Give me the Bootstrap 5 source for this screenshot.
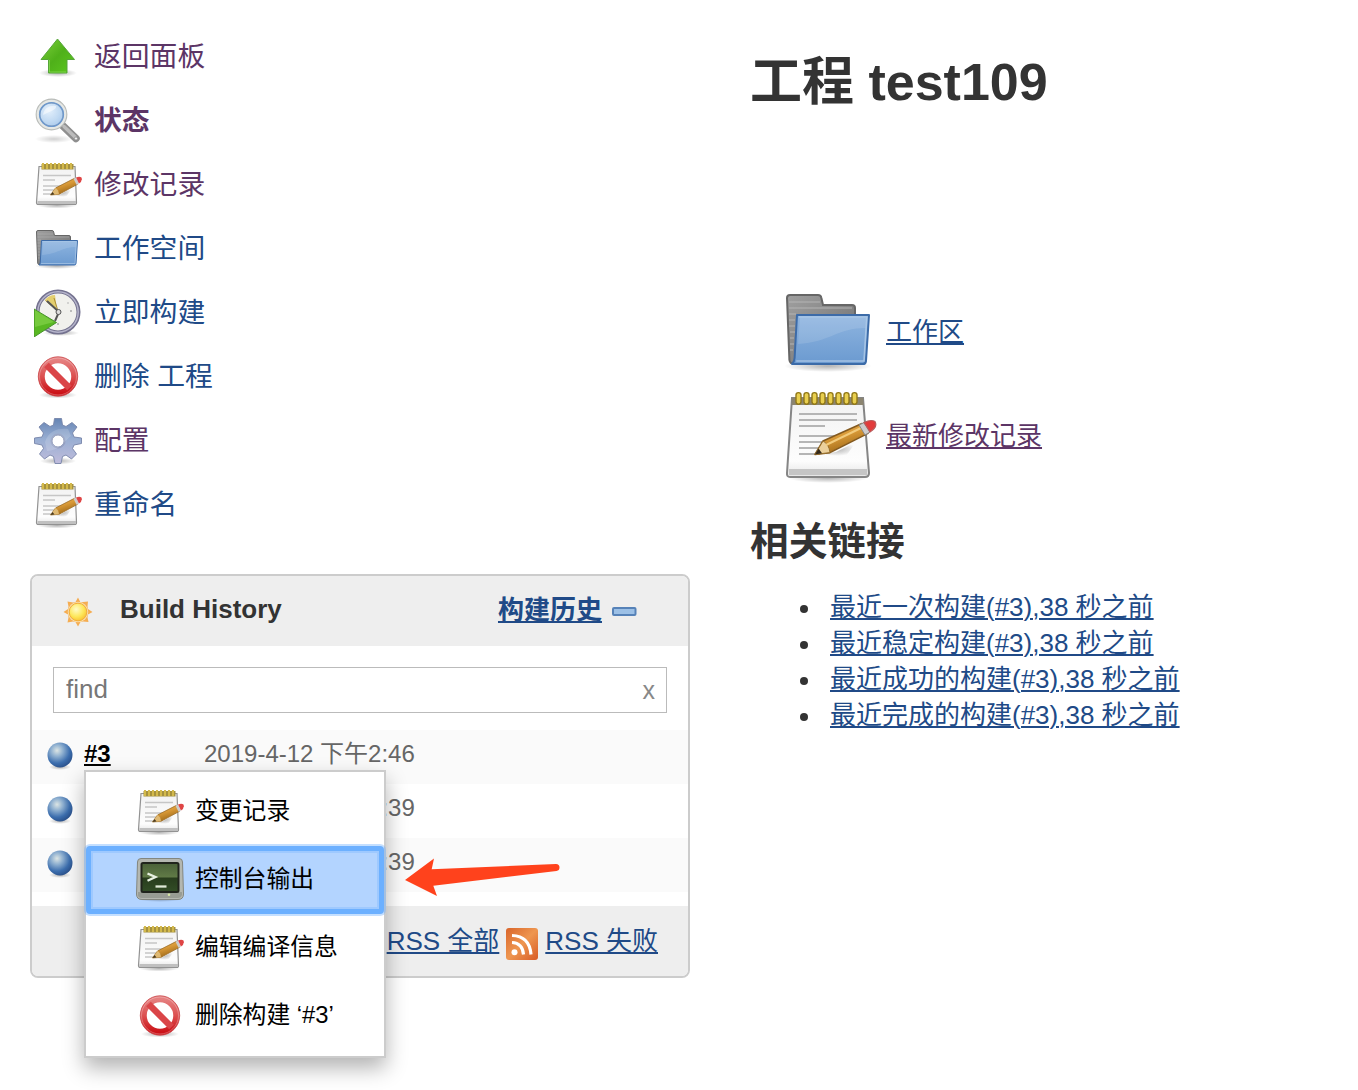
<!DOCTYPE html>
<html lang="zh-CN">
<head>
<meta charset="utf-8">
<meta name="viewport" content="width=device-width, initial-scale=1">
<title>test109 [Jenkins]</title>
<link href="https://cdn.jsdelivr.net/npm/bootstrap@5.3.0/dist/css/bootstrap.min.css" rel="stylesheet">
<style>
body{font-family:"Liberation Sans","Noto Sans CJK SC",sans-serif;color:#333;background:#fff;font-size:26px;line-height:36px;overflow:hidden;min-height:1090px}
a{color:#204a87;text-underline-offset:2px;text-decoration-thickness:2px}
a.seen{color:#5c3566}
.side-col{width:690px;padding:25px 0 0 30px}
.task-link{height:64px;padding:0 0 0 4px;gap:12px;font-size:27.8px;text-decoration:none}
.ico{width:48px;height:48px;flex:none;display:block;filter:blur(.45px)}
.ico-lg{width:96px;height:96px;flex:none;display:block;margin-top:-6px}
.menu-row span{margin-top:-3px}
.history{margin-top:37px;border:2px solid #ccc;border-radius:8px;background:#fff}
.history-head{height:70px;background:#eee;padding:0 50px 0 30px;border-radius:6px 6px 0 0}
.history-head .ttl{margin-left:26px;margin-top:-4px}
.history-head a{margin-top:-3px}
.history-head svg{margin-top:2px}
.find-box{height:46px;margin:21px 21px 17px;border:1px solid #bbb;padding:0 11px 2px 12px;color:#777}
.find-box .clr{color:#888;font-size:25px;margin-top:1px}
.build-row{height:54px;padding:0 12px;font-size:24px;color:#666}
.build-row:nth-child(odd){background:#fafafa}
.build-row svg{width:32px;height:32px;margin-top:-4px}
.build-row .num,.build-row time{margin-top:-6px}
.build-row .num{width:120px;margin-left:8px}
.build-row a{color:#000}
.history-foot{height:70px;margin-top:14px;background:#eee;padding:0 30px 0 0;border-radius:0 0 6px 6px;gap:7px}
.history-foot svg{width:32px;height:32px;margin-top:6px}
.build-menu{left:84px;top:770px;width:302px;height:288px;border:2px solid #ccc;background:#fff;padding:6px 0;box-shadow:0 10px 20px rgba(0,0,0,.3);font-size:23.8px;color:#000}
.menu-row{height:68px;padding-left:50px;gap:11px;color:#000;text-decoration:none}
.menu-row.on{background:#b3d4ff;border:5px solid #6cb0ff;border-radius:4px;padding-left:45px;box-shadow:0 0 0 2px rgba(108,176,255,.4),inset 0 0 0 2px rgba(108,176,255,.3)}
.menu-row.on .ico{margin-top:2px}
.pointer{left:400px;top:852px}
.main-col{padding:51px 0 0 60px}
.main-col h1{font-size:52px;line-height:62px;font-weight:700;margin:0 0 170px}
.main-col h2{font-size:38.7px;line-height:50px;font-weight:700;margin:26px 0 22px}
.perm{height:104px;margin-left:32px;gap:8px}
.perm a{margin-top:-7px}
.related{padding-left:50px;margin:0}
.related li{gap:22px}
.related li::before{content:"";width:8px;height:8px;border-radius:50%;background:#333;margin-top:3px}
</style>
</head>
<body>
<svg width="0" height="0" class="position-absolute" aria-hidden="true">
<defs>
<linearGradient id="gUp" x1="0" y1="0" x2="1" y2="1"><stop offset="0" stop-color="#7fd03c"/><stop offset=".5" stop-color="#4fb01a"/><stop offset="1" stop-color="#5cc81f"/></linearGradient>
<linearGradient id="gFold" x1="0" y1="0" x2="0" y2="1"><stop offset="0" stop-color="#8fb5e0"/><stop offset="1" stop-color="#6b9ad0"/></linearGradient>
<linearGradient id="gBack" x1="0" y1="0" x2="1" y2="1"><stop offset="0" stop-color="#a0a0a0"/><stop offset="1" stop-color="#6c6c6c"/></linearGradient>
<linearGradient id="gPaper" x1="0" y1="0" x2="0" y2="1"><stop offset="0" stop-color="#f2f2f2"/><stop offset=".8" stop-color="#fdfdfd"/><stop offset="1" stop-color="#e4e4e4"/></linearGradient>
<linearGradient id="gNo" x1="0" y1="0" x2="0" y2="1"><stop offset="0" stop-color="#e58080"/><stop offset=".5" stop-color="#dc5050"/><stop offset="1" stop-color="#cb1218"/></linearGradient>
<linearGradient id="gGear" x1="0" y1="0" x2="0" y2="1"><stop offset="0" stop-color="#6685b4"/><stop offset=".45" stop-color="#98aed2"/><stop offset="1" stop-color="#c0bcdc"/></linearGradient>
<linearGradient id="gPen" x1="0" y1="0" x2=".5" y2="1"><stop offset="0" stop-color="#e9b65a"/><stop offset=".5" stop-color="#d99a38"/><stop offset="1" stop-color="#9a6414"/></linearGradient>
<linearGradient id="gScr" x1="0" y1="0" x2="0" y2="1"><stop offset="0" stop-color="#496038"/><stop offset=".48" stop-color="#607a46"/><stop offset=".52" stop-color="#283d1d"/><stop offset="1" stop-color="#324d26"/></linearGradient>
<linearGradient id="gRss" x1="0" y1="0" x2="1" y2="1"><stop offset="0" stop-color="#d9652b"/><stop offset=".5" stop-color="#ee9650"/><stop offset="1" stop-color="#d85b25"/></linearGradient>
<radialGradient id="gBall" cx=".38" cy=".32" r=".68"><stop offset="0" stop-color="#dce5e4"/><stop offset=".35" stop-color="#8fb0d0"/><stop offset=".75" stop-color="#3c6eae"/><stop offset="1" stop-color="#2d5590"/></radialGradient>
<radialGradient id="gSun" cx=".4" cy=".35" r=".7"><stop offset="0" stop-color="#fffbc8"/><stop offset=".6" stop-color="#fde75a"/><stop offset="1" stop-color="#f8c030"/></radialGradient>
<radialGradient id="gLens" cx=".4" cy=".35" r=".7"><stop offset="0" stop-color="#e4f0fc"/><stop offset=".6" stop-color="#c0d9f2"/><stop offset="1" stop-color="#a4c5ea"/></radialGradient>
<radialGradient id="gShade"><stop offset="0" stop-color="#000" stop-opacity=".3"/><stop offset="1" stop-color="#000" stop-opacity="0"/></radialGradient>
</defs>
<symbol id="i-up" viewBox="0 0 48 48"><ellipse cx="24" cy="40" rx="19" ry="4" fill="url(#gShade)"/><path d="M23.500 6 40.500 26.500H33V40H14.500V26.500H7Z" fill="url(#gUp)" stroke="#56a53a" stroke-width="1"/><path d="M15.500 27V39H32" fill="none" stroke="#8be05a" stroke-width="1" opacity=".7"/></symbol>
<symbol id="i-search" viewBox="0 0 48 48"><ellipse cx="20" cy="42" rx="19" ry="4" fill="url(#gShade)" opacity=".6"/><path d="M28 28 42 41.500" stroke="#8f8f8f" stroke-width="7.500" stroke-linecap="round"/><path d="M30 29.500 41 40" stroke="#bcbcbc" stroke-width="3.500" stroke-linecap="round"/><circle cx="42" cy="41.500" r="1.600" fill="#eee" stroke="#888" stroke-width=".7"/><circle cx="17.500" cy="17.500" r="13.500" fill="url(#gLens)" stroke="#b9bcb9" stroke-width="4.800"/><circle cx="17.500" cy="17.500" r="13.500" fill="none" stroke="#e6e8e5" stroke-width="2.600"/><circle cx="17.500" cy="17.500" r="11.800" fill="none" stroke="#6d98cd" stroke-width="1.600"/><path d="M9 18C10 11 16 8 22 9 23 13 16 14 9 18Z" fill="#fff" opacity=".5"/></symbol>
<symbol id="i-note-s" viewBox="0 0 48 48"><ellipse cx="23" cy="44.500" rx="20" ry="3" fill="url(#gShade)"/><path d="M5 5.500H41L42.500 41.500Q42.500 43.500 40.500 43.500H4.500Q2.500 43.500 2.500 41.500Z" fill="url(#gPaper)" stroke="#929292" stroke-width="1.200"/><path d="M3.500 40H42V43H3.500Z" fill="#c0c0c0"/><path d="M7.500 3H39.500V8.500H7.500Z" fill="#a5913f"/><path d="M9 2V8M13 2V8M17 2V8M21 2V8M25 2V8M29 2V8M33 2V8M37 2V8" stroke="#d3b94b" stroke-width="2"/><path d="M9 14.500H37M9 19H21M9 25H33M9 29H25M9 33H18" stroke="#c6c6c6" stroke-width="1.600"/><path d="M17 35 27 33 38 27 32 36Z" fill="url(#gShade)"/><path d="M16.500 34 21.500 27 40.500 17.300 43.500 23.300 25 33.300Z" fill="url(#gPen)" stroke="#9a6b25" stroke-width=".8"/><path d="M16.500 34 21.500 27Q24.500 28.500 25 33.300Z" fill="#dfb973"/><path d="M16.500 34 18.500 31 20.500 33.500Z" fill="#463820"/><path d="M39.500 17.800 42 16.500 45 22.500 42.500 23.800Z" fill="#ccc"/><path d="M42 16.500Q45.500 15 47.500 16.500 48.800 20 45 22.500Z" fill="#df4545"/></symbol>
<symbol id="i-note" viewBox="0 0 48 48"><ellipse cx="23" cy="45" rx="20" ry="2.500" fill="url(#gShade)"/><path d="M5 5H40.500L43.500 42.500Q43.500 44.500 41.500 44.500H4Q2.300 44.500 2.500 42.500Z" fill="url(#gPaper)" stroke="#858585" stroke-width="1"/><path d="M5 5H40.500L40.800 8.500H4.800Z" fill="#8b8470"/><path d="M3.500 40.500H42.500V43.500H3.500Z" fill="#c5c5c5"/><g fill="#e9cf4e" stroke="#917818" stroke-width=".7"><rect x="7" y="2.300" width="2.500" height="5.800" rx="1.200"/><rect x="11" y="2.300" width="2.500" height="5.800" rx="1.200"/><rect x="15" y="2.300" width="2.500" height="5.800" rx="1.200"/><rect x="19" y="2.300" width="2.500" height="5.800" rx="1.200"/><rect x="23" y="2.300" width="2.500" height="5.800" rx="1.200"/><rect x="27" y="2.300" width="2.500" height="5.800" rx="1.200"/><rect x="31" y="2.300" width="2.500" height="5.800" rx="1.200"/><rect x="35" y="2.300" width="2.500" height="5.800" rx="1.200"/></g><path d="M8.500 13H37.500M8.500 16H37.500M8.500 19H21.500M8.500 24H35M8.500 27H31M8.500 30H27M8.500 33H19" stroke="#b5b5b5" stroke-width=".9"/><path d="M17 33.500 27 32 37 27 32 34Z" fill="url(#gShade)"/><path d="M16.500 33.200 20.500 26.500 40 17.800 43 22.700 24 32.300Z" fill="url(#gPen)" stroke="#835a20" stroke-width=".8" stroke-linejoin="round"/><path d="M16.500 33.200 20.500 26.500Q23.500 28 24 32.300Z" fill="#ebd09c" stroke="#98702c" stroke-width=".5"/><path d="M16.500 33.200 18.300 30.300 20 32.600Z" fill="#33291a"/><path d="M22 28.500 40.500 19.500" stroke="#f2cb7c" stroke-width="1"/><path d="M38.500 18.500 41 17.300 44 22 41.500 23.500Z" fill="#ccc" stroke="#888" stroke-width=".5"/><path d="M41 17.300Q44.500 15.500 46.500 16.800 48 19.500 44 22Z" fill="#e23b3b" stroke="#b85a5a" stroke-width=".6"/></symbol>
<symbol id="i-folder" viewBox="0 0 48 48"><ellipse cx="23" cy="41" rx="22" ry="3" fill="url(#gShade)"/><path d="M2.500 7Q2.500 5.500 4 5.500H18Q19.500 5.500 19.700 7L20.500 10.500H35Q36.500 10.500 36.500 12V39H6Q4 40.500 3.700 38Z" fill="url(#gBack)" stroke="#666" stroke-width="1"/><path d="M3.500 9H19M3.500 12H35M3.500 15H7M3.500 18H6.500M3.500 21H6.500M4 24H6.500M4 27H6M4 30H6M4 33H5.500" stroke="#b5b5b5" stroke-width=".8" opacity=".65"/><path d="M7.500 15.500H43.500L42 38.500Q41.800 40 40.500 40H5Q6.200 39 6.300 37Z" fill="url(#gFold)" stroke="#3c6ba8" stroke-width="1" stroke-linejoin="round"/><path d="M8.500 16.500H42.400L41 38.500H7.100" fill="none" stroke="#b5cfea" stroke-width=".8" opacity=".75"/><path d="M9 17H42L41.700 22C28 22 24 29 8 30Z" fill="#fff" opacity=".12"/></symbol>
<symbol id="i-clock" viewBox="0 0 48 48"><ellipse cx="27" cy="44" rx="18" ry="3" fill="url(#gShade)"/><circle cx="24" cy="23" r="20.500" fill="#f1f1ed" stroke="#74728f" stroke-width="4"/><circle cx="24" cy="23" r="20.200" fill="none" stroke="#b5b4cb" stroke-width="1.500"/><path d="M23 22 11 11Q15 6 21 6Z" fill="#e4cf70"/><path d="M23 21 11.500 11.500M24 22 20 9" stroke="#a98d36" stroke-width="1"/><path d="M13 12 25 23 21 32" fill="none" stroke="#555" stroke-width="2"/><circle cx="24.500" cy="23" r="2.500" fill="#ddd" stroke="#555" stroke-width="1"/><g fill="#aaa"><circle cx="37" cy="22" r="1"/><circle cx="34" cy="14" r=".8"/><circle cx="24" cy="35" r="1"/></g><path d="M0 20 22.500 33.500 0 48Z" fill="#59b822" stroke="#48922c"/><path d="M1 21 20 33 1 38Z" fill="#9ae05f" opacity=".45"/></symbol>
<symbol id="i-stop" viewBox="0 0 48 48"><ellipse cx="24" cy="42" rx="19" ry="3.500" fill="url(#gShade)"/><circle cx="24" cy="23.500" r="16.500" fill="#fff" stroke="url(#gNo)" stroke-width="6.500"/><path d="M12.500 12 35.500 35" stroke="#da4548" stroke-width="6.500"/><circle cx="24" cy="23.500" r="19.700" fill="none" stroke="#ca4a4c" stroke-width=".8"/><circle cx="24" cy="23.500" r="18.500" fill="none" stroke="#fff" stroke-width=".7" opacity=".4"/></symbol>
<symbol id="i-gear" viewBox="0 0 48 48"><ellipse cx="24" cy="44" rx="18" ry="3.500" fill="url(#gShade)"/><path fill-rule="evenodd" d="M20.500 1.500H27.500L28.500 8 32 9.500 38 5.500 43 10 38.500 16 40 20 47.500 21V26.500L40 28 38.500 31.500 42.500 37 37.500 42 32 38 28.500 39.500 27 46.500H21L19.500 39.500 16 38 10.500 42 5.500 37 9.500 31.500 8 28 .500 26.500V21L8 20 9.500 16 5 10 10 5.500 16 9.500 19.500 8ZM24 18A6 6 0 1 0 24 30 6 6 0 1 0 24 18Z" fill="url(#gGear)" stroke="#7785a9" stroke-width=".9" stroke-linejoin="round"/><circle cx="24" cy="24" r="7" fill="none" stroke="#8b91b4" stroke-width="1" opacity=".7"/><path d="M11 25C15 13 25 11 34 12L37 19C31 23 28 33 13 34Z" fill="#fff" opacity=".16"/></symbol>
<symbol id="i-term" viewBox="0 0 48 48"><ellipse cx="24" cy="42" rx="22" ry="3" fill="url(#gShade)"/><path d="M5 1.500H43Q46.500 1.500 46.500 5L47.500 37Q47.500 42.500 42 42.500H6Q.500 42.500 .500 37L1.500 5Q1.500 1.500 5 1.500Z" fill="#b4b7b0" stroke="#83867f"/><path d="M2 35H46V38Q45 41 42 41H6Q2 41 2 38Z" fill="#989c94"/><rect x="5.500" y="6" width="37" height="29" rx="1.500" fill="url(#gScr)" stroke="#20241c" stroke-width="2"/><path d="M11.500 16.500 19.500 20 11.500 23.700" fill="none" stroke="#e9f2e2" stroke-width="2.300"/><path d="M19.500 29.500H30.500" stroke="#dfe9d7" stroke-width="2.300"/><circle cx="33" cy="37.700" r="1.300" fill="#d7e7a5"/></symbol>
<symbol id="i-ball" viewBox="0 0 32 32"><ellipse cx="16" cy="28" rx="11" ry="3" fill="url(#gShade)"/><circle cx="16" cy="16" r="12.500" fill="url(#gBall)"/></symbol>
<symbol id="i-rss" viewBox="0 0 32 32"><rect width="32" height="32" rx="3" fill="url(#gRss)"/><circle cx="8.500" cy="24.300" r="3" fill="#fff"/><path d="M6 14.500Q16.500 15 17.500 26.500M6 7.500Q23.500 8 25 26.500" fill="none" stroke="#fff" stroke-width="3.200"/></symbol>
</svg>

<div class="d-flex">
  <div class="side-col flex-shrink-0">
    <nav class="d-flex flex-column">
      <a class="task-link seen d-flex align-items-center" href="#"><svg class="ico"><use href="#i-up"/></svg><span>返回面板</span></a>
      <a class="task-link seen d-flex align-items-center fw-bold" href="#"><svg class="ico"><use href="#i-search"/></svg><span>状态</span></a>
      <a class="task-link seen d-flex align-items-center" href="#"><svg class="ico"><use href="#i-note-s"/></svg><span>修改记录</span></a>
      <a class="task-link d-flex align-items-center" href="#"><svg class="ico"><use href="#i-folder"/></svg><span>工作空间</span></a>
      <a class="task-link d-flex align-items-center" href="#"><svg class="ico"><use href="#i-clock"/></svg><span>立即构建</span></a>
      <a class="task-link d-flex align-items-center" href="#"><svg class="ico"><use href="#i-stop"/></svg><span>删除 工程</span></a>
      <a class="task-link seen d-flex align-items-center" href="#"><svg class="ico"><use href="#i-gear"/></svg><span>配置</span></a>
      <a class="task-link d-flex align-items-center" href="#"><svg class="ico"><use href="#i-note-s"/></svg><span>重命名</span></a>
    </nav>

    <section class="history">
      <div class="history-head d-flex align-items-center fw-bold">
        <svg width="32" height="32" viewBox="0 0 32 32"><path d="M16 1.500 18.500 6.500 21 6 26 5.500 25.500 10.500 26 13 30.500 16 26 18.500 25.500 21.500 26.500 26 21 25.500 18.500 26 16 30.500 13.500 26 11 25.500 5.500 26.500 6.500 21.500 6 18.500 1.500 16 6 13 6.500 10.500 5.500 5.500 11 6.500 13.500 6Z" fill="#f5ad52"/><circle cx="16" cy="16" r="10.300" fill="#f8dca8"/><circle cx="16" cy="16" r="8.800" fill="url(#gSun)" stroke="#f3ad3a" stroke-width="1"/></svg>
        <span class="ttl">Build History</span>
        <a class="ms-auto" href="#">构建历史</a>
        <svg class="ms-2" width="28" height="14" viewBox="0 0 28 14"><rect x="3" y="3" width="22.500" height="7" rx="1" fill="#9cc0e6" stroke="#5682b8" stroke-width="2"/></svg>
      </div>
      <div class="find-box d-flex align-items-center justify-content-between"><span>find</span><span class="clr">x</span></div>
      <div>
        <div class="build-row d-flex align-items-center"><svg><use href="#i-ball"/></svg><span class="num"><a class="fw-bold" href="#">#3</a></span><time>2019-4-12 下午2:46</time></div>
        <div class="build-row d-flex align-items-center"><svg><use href="#i-ball"/></svg><span class="num"></span><time>2019-4-12 下午2:39</time></div>
        <div class="build-row d-flex align-items-center"><svg><use href="#i-ball"/></svg><span class="num"></span><time>2019-4-12 下午2:39</time></div>
      </div>
      <div class="history-foot d-flex align-items-center justify-content-end">
        <a href="#">RSS 全部</a><svg><use href="#i-rss"/></svg><a href="#">RSS 失败</a>
      </div>
    </section>
  </div>

  <main class="main-col">
    <h1>工程 test109</h1>
    <div class="perm d-flex align-items-center"><svg class="ico-lg"><use href="#i-folder"/></svg><a href="#">工作区</a></div>
    <div class="perm d-flex align-items-center"><svg class="ico-lg"><use href="#i-note"/></svg><a class="seen" href="#">最新修改记录</a></div>
    <h2>相关链接</h2>
    <ul class="related list-unstyled">
      <li class="d-flex align-items-center"><a href="#">最近一次构建(#3),38 秒之前</a></li>
      <li class="d-flex align-items-center"><a href="#">最近稳定构建(#3),38 秒之前</a></li>
      <li class="d-flex align-items-center"><a href="#">最近成功的构建(#3),38 秒之前</a></li>
      <li class="d-flex align-items-center"><a href="#">最近完成的构建(#3),38 秒之前</a></li>
    </ul>
  </main>
</div>

<div class="build-menu position-absolute">
  <a class="menu-row d-flex align-items-center" href="#"><svg class="ico"><use href="#i-note-s"/></svg><span>变更记录</span></a>
  <a class="menu-row on d-flex align-items-center" href="#"><svg class="ico"><use href="#i-term"/></svg><span>控制台输出</span></a>
  <a class="menu-row d-flex align-items-center" href="#"><svg class="ico"><use href="#i-note-s"/></svg><span>编辑编译信息</span></a>
  <a class="menu-row d-flex align-items-center" href="#"><svg class="ico"><use href="#i-stop"/></svg><span>删除构建 ‘#3’</span></a>
</div>
<svg class="pointer position-absolute" width="164" height="48" viewBox="0 0 164 48"><path d="M5 28 34 6.500 31.700 17.300 156 12Q159.500 12 159.500 15.500 159.500 18.500 156.500 19L33.300 33.700 37 44Z" fill="#ff421c"/></svg>
<script src="https://cdn.jsdelivr.net/npm/bootstrap@5.3.0/dist/js/bootstrap.bundle.min.js"></script>
</body>
</html>
